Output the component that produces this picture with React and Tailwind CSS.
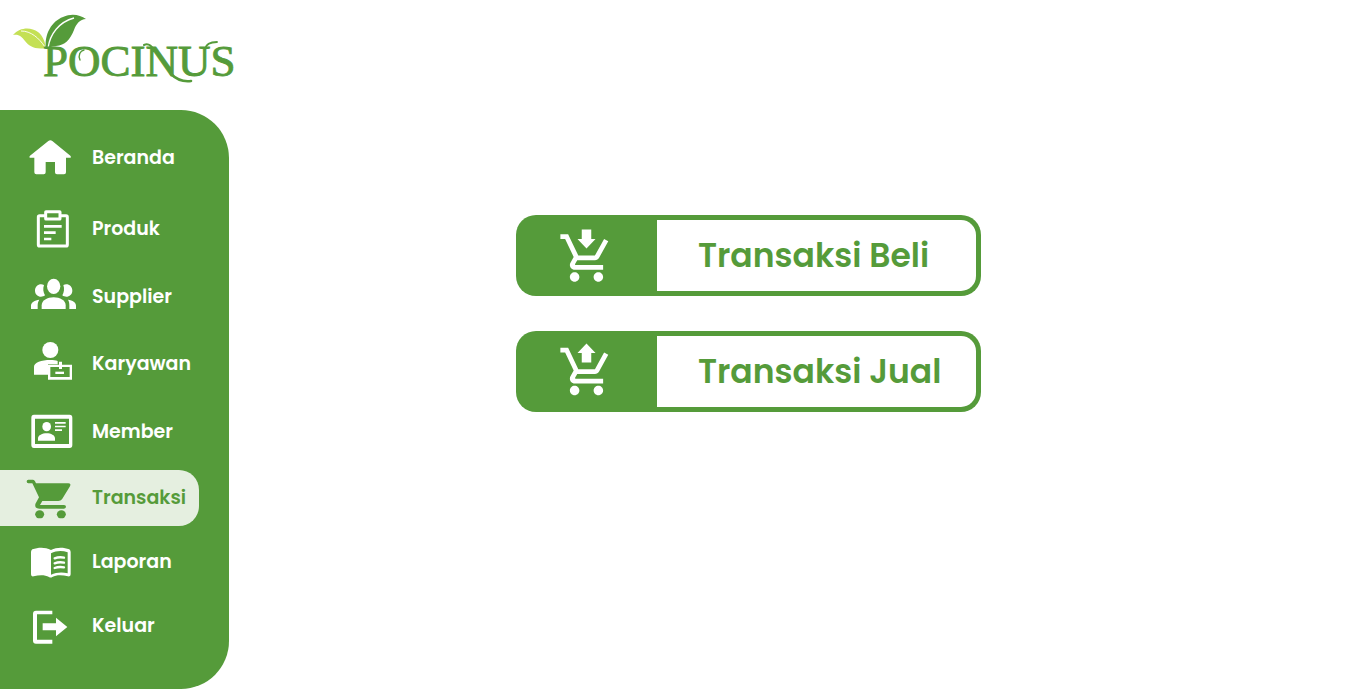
const ICON = 'h-14 w-14 shrink-0 fill-current stroke-none'

function HomeIcon() {
  return (
    <svg className={ICON} viewBox="72 30 168 168" aria-hidden="true">
      <path d="M145 63q6-5 12 0l54 44q5 6-3 6h-10v44q0 6-6 6h-21q-6 0-6-6v-31h-28v31q0 6-6 6h-22q-6 0-6-6v-44H93q-8 0-3-6z" />
    </svg>
  )
}

function ClipboardIcon() {
  return (
    <svg className={ICON} viewBox="72 243 168 168" aria-hidden="true">
      <g fill="none" stroke="currentColor" strokeLinejoin="round">
        <path strokeWidth="9" d="M137 287h-18q-4 0-4 4v83q0 4 4 4h79q4 0 4-4v-83q0-4-4-4h-18" />
        <rect strokeWidth="9" x="137" y="275" width="43" height="22" rx="1" />
        <path strokeWidth="8" d="M132 319h53M132 338h35M132 357h22" />
      </g>
    </svg>
  )
}

function GroupIcon() {
  return (
    <svg className={ICON} viewBox="72 27 168 168" aria-hidden="true">
      <ellipse cx="161" cy="79" rx="20" ry="23" />
      <path d="M125 147v-11c0-15 17-24 36-24s36 9 36 24v11z" />
      <path d="M132 75c-13-6-27 2-27 17s17 24 30 14c-5-9-7-20-3-31zM190 75c13-6 27 2 27 17s-17 24-30 14c5-9 7-20 3-31z" />
      <path d="M118 119c-14 2-25 8-25 18v10h20v-11c0-7 2-12 5-17zM204 119c14 2 24 8 24 18v10h-20v-11c0-7-1-12-4-17z" />
    </svg>
  )
}

function StaffIcon() {
  return (
    <svg className={ICON} viewBox="72 228 168 168" aria-hidden="true">
      <circle cx="151" cy="270" r="24" />
      <path d="M102 344v-24c0-12 22-20 49-20 9 0 16 1 22 3v10h-29v31z" />
      <path fillRule="evenodd" d="M144 314h33v-9h9v9h30v45h-72zm7 7v30h58v-30h-23v6h-9v-6z" />
      <path d="M166 335h26v7h-26z" />
    </svg>
  )
}

function CardIcon() {
  return (
    <svg className={ICON} viewBox="72 42 168 168" aria-hidden="true">
      <path fillRule="evenodd" d="M102 74h107q8 0 8 9v82q0 9-8 9H102q-8 0-8-9V83q0-9 8-9zm3 12v76h102V86z" />
      <ellipse cx="140" cy="110" rx="13" ry="14" />
      <path d="M114 152v-7c0-9 13-15 26-15s25 6 25 15v7zM165 96h32v5h-32zM165 107h32v5h-32zM165 118h21v5h-21z" />
    </svg>
  )
}

function CartIcon() {
  return (
    <svg className={ICON} viewBox="72 240 168 168" aria-hidden="true">
      <path d="M85 269h14q4 0 6 5l3 6h97q9 0 5 9l-24 39q-4 5-11 5h-48l-7 12h72q6 0 6 5.500t-6 5.500h-74q-15 0-12-14l11-20-20-42H85q-5 0-5-5.500t5-5.500z" />
      <ellipse cx="119" cy="373" rx="13.500" ry="12" />
      <ellipse cx="184" cy="373" rx="13.500" ry="12" />
    </svg>
  )
}

function BookIcon() {
  return (
    <svg className={ICON} viewBox="72 9 168 168" aria-hidden="true">
      <path fillRule="evenodd" d="M93 63q0-5 4-8c18-6 38-7 56 2 18-9 38-8 55-2q4 3 4 8v67q0 8-8 6c-18-5-35-5-47 2q-5 3-10 0c-12-7-29-7-46-2q-8 2-8-6zm60 4v64c16-7 33-8 50-4V64c-17-6-34-5-50 3z" />
      <path fill="none" stroke="currentColor" strokeWidth="7" strokeLinecap="round" d="M164 82q13-5 28-2M164 97q13-5 28-2M164 111q13-5 28-2" />
    </svg>
  )
}

function ExitIcon() {
  return (
    <svg className={ICON} viewBox="72 204 168 168" aria-hidden="true">
      <path d="M157 242v11h-46v76h46v12h-49q-9 0-9-9v-81q0-9 9-9z" />
      <path d="M128 280h40v-17l34 28-34 28v-18h-40z" />
    </svg>
  )
}

const MENU = [
  { label: 'Beranda', Icon: HomeIcon, space: '' },
  { label: 'Produk', Icon: ClipboardIcon, space: 'mt-[15px]' },
  { label: 'Supplier', Icon: GroupIcon, space: 'mt-3' },
  { label: 'Karyawan', Icon: StaffIcon, space: 'mt-[11px]' },
  { label: 'Member', Icon: CardIcon, space: 'mt-3' },
  { label: 'Transaksi', Icon: CartIcon, space: 'mt-[10px]', active: true },
  { label: 'Laporan', Icon: BookIcon, space: 'mt-2' },
  { label: 'Keluar', Icon: ExitIcon, space: 'mt-2' },
]

function Logo() {
  return (
    <svg className="block h-[110px] w-[245px]" viewBox="0 0 245 110" role="img" aria-label="Pocinus">
      <path className="fill-[#c4e055]" d="M13 35C20 27 31 27 38 32c5 4 7 10 8 16-11 2-17-2-21-7-3-4-6-7-12-6z" />
      <path fill="none" stroke="white" strokeWidth="0.900" d="M21 31c10 0 18 7 24 16" />
      <path className="fill-[#559b3a]" d="M46 49C44 34 52 21 63 17c9-4 17-2 23 2-6 0-10 5-12 11-4 10-9 15-18 16-5 1-8 1-10 3z" />
      <path fill="none" stroke="white" strokeWidth="1.300" d="M48 48c2-14 11-26 26-30" />
      <text x="43" y="76" className="fill-[#559b3a] font-['Liberation_Serif',serif] text-[45px] font-normal" stroke="#559b3a" strokeWidth="0.900">POCINUS</text>
      <g fill="none" className="stroke-[#559b3a]" strokeLinecap="round">
        <path strokeWidth="2" d="M144 45c4-2 7 0 10 5" />
        <path strokeWidth="2.600" d="M171 74c5 5 12 8 20 7" />
        <path strokeWidth="1.800" d="M205 49c1-5 5-7 12-7" />
        <path strokeWidth="1.400" d="M80 60c-2-5 0-9 4-10" />
      </g>
    </svg>
  )
}

const CART =
  'M7 18c-1.100 0-2 .9-2 2s.9 2 2 2 2-.9 2-2-.9-2-2-2zm10 0c-1.100 0-2 .9-2 2s.9 2 2 2 2-.9 2-2-.9-2-2-2zm-9.830-3.250l.03-.12.9-1.630h7.450c.75 0 1.410-.41 1.750-1.030l3.860-7.010L19.420 4h-.01l-1.100 2-2.760 5H8.530l-.13-.27L6.160 6l-.95-2-.94-2H1v2h2l3.600 7.590-1.350 2.450c-.16.28-.25.61-.25.96 0 1.100.9 2 2 2h12v-2H7.420c-.13 0-.25-.11-.25-.25z'

const ACTIONS = [
  { label: 'Transaksi Beli', box: '0 -1 24 24', arrow: 'M10 0h4v4h1.800L12 8 8.200 4H10z' },
  { label: 'Transaksi Jual', box: '0 0 24 24', arrow: 'M12 .2l3.800 4H14v4h-4v-4H8.200z' },
]

export default function App() {
  return (
    <div className="flex min-h-screen items-stretch bg-white font-['Poppins','Inter',sans-serif] font-semibold">
      <aside className="w-[245px] shrink-0">
        <a href="#beranda" className="block">
          <Logo />
        </a>
        <nav className="mr-4 rounded-r-[48px] bg-[#559b3a] pt-5 pb-[35px]">
          <ul>
            {MENU.map(({ label, Icon, space, active }) => (
              <li key={label} className={space}>
                <a
                  href={'#' + label.toLowerCase()}
                  aria-current={active ? 'page' : undefined}
                  className={
                    active
                      ? 'mr-[30px] flex h-14 items-center gap-3 rounded-r-[20px] bg-[#e5efe0] pl-6 text-[19px] leading-7 text-[#559b3a]'
                      : 'mr-[30px] flex h-14 items-center gap-3 pl-6 text-[19px] leading-7 text-white'
                  }
                >
                  <Icon />
                  {label}
                </a>
              </li>
            ))}
          </ul>
        </nav>
      </aside>
      <main className="flex flex-1 flex-col gap-[35px] pt-[215px] pr-8 pl-[271px]">
        {ACTIONS.map(({ label, box, arrow }) => (
          <button
            key={label}
            type="button"
            className="flex h-[81px] w-full max-w-[465px] cursor-pointer items-stretch rounded-[20px] bg-[#559b3a] py-[5px] pr-[5px] text-[#559b3a]"
          >
            <span className="flex w-[141px] shrink-0 items-center justify-center text-white">
              <svg className="h-[57px] w-[57px] fill-current" viewBox={box} aria-hidden="true">
                <path d={CART} />
                <path d={arrow} />
              </svg>
            </span>
            <span className="flex flex-1 items-center rounded-r-[15px] bg-white pl-[41px] text-[33px] leading-12 whitespace-nowrap">
              {label}
            </span>
          </button>
        ))}
      </main>
    </div>
  )
}
